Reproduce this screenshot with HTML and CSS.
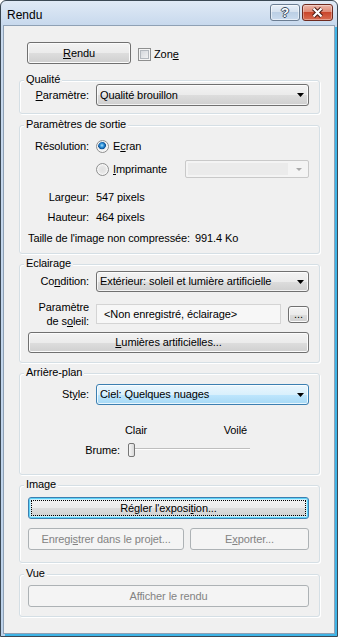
FILE: index.html
```html
<!DOCTYPE html>
<html lang="fr">
<head>
<meta charset="utf-8">
<title>Rendu</title>
<link rel="stylesheet" href="styles.css">
</head>
<body>
<div class="window">
  <div class="titlebar">
    <div class="title">Rendu</div>
    <div class="caption">
      <div class="cbtn help"><span>?</span></div>
      <div class="cbtn close">
        <svg width="13" height="11" viewBox="0 0 13 11"><path d="M2.5 1.5 L10.5 9.5 M10.5 1.5 L2.5 9.5" stroke="#4a1a12" stroke-width="4.2" fill="none"/><path d="M2.5 1.5 L10.5 9.5 M10.5 1.5 L2.5 9.5" stroke="#ffffff" stroke-width="2.2" fill="none"/></svg>
      </div>
    </div>
  </div>

  <div class="client">
    <div class="toprow">
      <button class="btn btn-rendu"><u>R</u>endu</button>
      <div class="check"><span class="checkbox"></span><span>Zon<u>e</u></span></div>
    </div>

    <section class="group g-first">
      <div class="gtitle">Qualité</div>
      <div class="form row-qual">
        <span class="lbl"><u>P</u>aramètre:</span>
        <div class="combo"><span class="val">Qualité brouillon</span><svg class="arrow" width="7" height="4" viewBox="0 0 7 4"><path d="M0 0H7L3.5 4Z" fill="#000"/></svg></div>
      </div>
    </section>

    <section class="group g-sortie">
      <div class="gtitle">Paramètres de sortie</div>
      <div class="form row-res">
        <span class="lbl">Résolution:</span>
        <div class="rad"><span class="radio on"></span><span>E<u>c</u>ran</span></div>
      </div>
      <div class="form row-imp">
        <span></span>
        <div class="imp">
          <div class="rad"><span class="radio"></span><span><u>I</u>mprimante</span></div>
          <div class="combo-dis"><span class="field"></span><svg class="arrow-dis" width="6" height="3" viewBox="0 0 6 3"><path d="M0 0H6L3 3Z" fill="#a9a9a9"/></svg></div>
        </div>
      </div>
      <div class="form row-info row-larg">
        <span class="lbl">Largeur:</span>
        <span>547 pixels</span>
      </div>
      <div class="form row-info row-haut">
        <span class="lbl">Hauteur:</span>
        <span>464 pixels</span>
      </div>
      <div class="taille">
        <span>Taille de l'image non compressée:</span>
        <span>991.4 Ko</span>
      </div>
    </section>

    <section class="group g-ecl">
      <div class="gtitle">Eclairage</div>
      <div class="form row-cond">
        <span class="lbl">Co<u>n</u>dition:</span>
        <div class="combo combo-21"><span class="val">Extérieur: soleil et lumière artificielle</span><svg class="arrow" width="7" height="4" viewBox="0 0 7 4"><path d="M0 0H7L3.5 4Z" fill="#000"/></svg></div>
      </div>
      <div class="form row-sol">
        <span class="lbl lbl-2">Paramètre<br>de s<u>o</u>leil:</span>
        <div class="sol">
          <div class="tbox">&lt;Non enregistré, éclairage&gt;</div>
          <button class="btn btn-dots">...</button>
        </div>
      </div>
      <button class="btn btn-wide btn-21 row-lum"><span><u>L</u>umières artificielles...</span></button>
    </section>

    <section class="group g-arr">
      <div class="gtitle">Arrière-plan</div>
      <div class="form row-style">
        <span class="lbl">St<u>y</u>le:</span>
        <div class="combo combo-21 combo-focus"><span class="val">Ciel: Quelques nuages</span><svg class="arrow" width="7" height="4" viewBox="0 0 7 4"><path d="M0 0H7L3.5 4Z" fill="#000"/></svg></div>
      </div>
      <div class="scale">
        <span>Clair</span>
        <span>Voilé</span>
      </div>
      <div class="brume">
        <span class="brume-lbl">Brume:</span>
        <div class="slider"><span class="thumb"></span></div>
      </div>
    </section>

    <section class="group g-img">
      <div class="gtitle">Image</div>
      <button class="btn btn-wide btn-focus row-regl"><span>Régler l'exposi<u>t</u>ion...</span></button>
      <div class="pair">
        <button class="btn btn-dis">Enregi<u>s</u>trer dans le projet...</button>
        <button class="btn btn-dis">E<u>x</u>porter...</button>
      </div>
    </section>

    <section class="group g-vue">
      <div class="gtitle">Vue</div>
      <button class="btn btn-wide btn-dis row-aff">Afficher le rendu</button>
    </section>
  </div>
</div>
</body>
</html>
```

FILE: styles.css
```css
* { box-sizing: border-box; }
html, body { margin: 0; padding: 0; }
body {
  font-family: "Liberation Sans", Arial, sans-serif;
  font-size: 11px;
  letter-spacing: -0.1px;
  color: #000;
  background: #ffffff;
}

.window {
  width: 338px;
  height: 637px;
  border: 1px solid #3b4854;
  border-radius: 6px 6px 0 0;
  background: linear-gradient(to bottom, #e0eaf6 0, #c8d9ed 24px, #bdd2ea 100%);
  padding: 0 2px 2px 2px;
  display: flex;
  flex-direction: column;
}

.titlebar {
  height: 24px;
  flex: none;
  display: flex;
  justify-content: space-between;
  align-items: flex-start;
  padding: 0 2px 0 4px;
}
.title {
  font-size: 12px;
  line-height: 14px;
  letter-spacing: 0;
  margin-top: 7px;
}
.caption { display: flex; gap: 2px; margin-top: 3px; }
.cbtn {
  height: 17px;
  border-radius: 3px;
  display: flex;
  align-items: center;
  justify-content: center;
}
.help {
  width: 30px;
  border: 1px solid #6b7d92;
  background: linear-gradient(#e8eff8 0%, #d5e1ef 45%, #bccfe5 50%, #cadbee 100%);
  box-shadow: inset 0 0 0 1px rgba(255,255,255,0.55);
}
.help span {
  font: bold 13px/13px "Liberation Sans", Arial, sans-serif;
  color: #fff;
  text-shadow: 1px 0 0 #3a4b5f, -1px 0 0 #3a4b5f, 0 1px 0 #3a4b5f, 0 -1px 0 #3a4b5f;
}
.close {
  width: 31px;
  border: 1px solid #6e2a1f;
  background: linear-gradient(#ecb5a8 0%, #df8b77 45%, #c9462c 50%, #d96c51 100%);
  box-shadow: inset 0 0 0 1px rgba(255,255,255,0.35);
}

.client {
  flex: 1;
  background: #f0f0f0;
  border: 1px solid #8fa1b5;
  box-shadow: 2px 2px 0 #3fb4e6;
  padding: 16px 14px 0 15px;
}

/* top row */
.toprow {
  display: flex;
  align-items: center;
  height: 22px;
  padding-left: 8px;
}
.btn {
  font: inherit;
  letter-spacing: inherit;
  color: #000;
  height: 22px;
  margin: 0;
  padding: 0;
  border: 1px solid #707070;
  border-radius: 3px;
  background: linear-gradient(#f3f3f3 0%, #ebebeb 50%, #dddddd 51%, #cfcfcf 100%);
  box-shadow: inset 0 0 0 1px #fbfbfb;
  display: flex;
  align-items: center;
  justify-content: center;
  line-height: 13px;
}
.btn-rendu { width: 104px; }
.check {
  display: flex;
  align-items: center;
  margin-left: 7px;
  margin-top: 3px;
  line-height: 13px;
}
.checkbox {
  width: 13px;
  height: 13px;
  border: 1px solid #8e8f8f;
  background: linear-gradient(135deg, #cdd1d7, #f8f8f8);
  box-shadow: inset 0 0 0 1px #f4f4f4, inset 0 0 0 2px #b3b8be;
  margin-right: 3px;
}

/* group boxes */
.group {
  border: 1px solid #d5dfe5;
  border-radius: 3px;
  box-shadow: 1px 1px 0 #ffffff, inset 1px 1px 0 #ffffff;
  padding: 0 10px 0 8px;
  margin-top: 10px;
}
.gtitle {
  margin: -7px 0 0 -4px;
  padding: 0 2px;
  width: fit-content;
  height: 11px;
  line-height: 11px;
  background: #f0f0f0;
}
.g-first { margin-top: 16px; padding-bottom: 7px; }
.g-sortie { margin-top: 11px; padding-bottom: 8px; }
.g-ecl { padding-bottom: 9px; }
.g-arr { padding-bottom: 17px; }
.g-img { padding-bottom: 12px; }
.g-vue { margin-top: 11px; padding-bottom: 9px; }

.form {
  display: grid;
  grid-template-columns: 61px 1fr;
  column-gap: 7px;
  align-items: center;
}
.lbl { text-align: right; line-height: 13px; white-space: nowrap; }
.lbl-2 { line-height: 14px; }

.combo {
  height: 22px;
  border: 1px solid #707070;
  border-radius: 3px;
  background: linear-gradient(#f3f3f3 0%, #ebebeb 50%, #dddddd 51%, #cfcfcf 100%);
  box-shadow: inset 0 0 0 1px rgba(255,255,255,0.75);
  display: flex;
  align-items: center;
  padding: 0 4px 0 3px;
}
.combo-21 { height: 21px; }
.combo-focus {
  border-color: #3c7fb1;
  background: linear-gradient(#eaf6fd 0%, #d9f0fc 50%, #bee6fd 51%, #a7d9f5 100%);
}
.val { flex: 1; white-space: nowrap; overflow: hidden; line-height: 13px; }
.arrow { flex: none; }

.row-qual { margin-top: -1px; }

/* sortie */
.row-res { margin-top: 8px; height: 16px; }
.row-imp { margin-top: 6px; height: 18px; }
.rad { display: flex; align-items: center; gap: 4px; line-height: 13px; }
.radio {
  width: 13px;
  height: 13px;
  border-radius: 50%;
  border: 1px solid #8e8f8f;
  background: radial-gradient(circle 6px at 50% 50%, #e0e0e0 0, #e6e6e6 3px, #f2f2f2 5.5px);
  box-shadow: inset 0 0 0 1px #f7f7f7;
  flex: none;
}
.radio.on {
  background: radial-gradient(circle 6px at 45% 40%, #a9e0fa 0, #2b8fd8 2px, #0c4e92 3.6px, #e4e8ec 4.2px, #f6f6f6 5.5px);
}
.imp { display: flex; align-items: center; height: 18px; }
.combo-dis {
  width: 124px;
  height: 18px;
  margin-left: auto;
  border: 1px solid #c9c9c9;
  border-radius: 2px;
  background: #f4f4f4;
  display: flex;
  align-items: center;
  padding: 2px;
}
.combo-dis .field { width: 100px; height: 100%; background: #ebebeb; }
.arrow-dis { margin-left: auto; margin-right: 4px; }

.row-info { line-height: 13px; height: 13px; }
.row-larg { margin-top: 13px; }
.row-haut { margin-top: 7px; }
.taille {
  display: flex;
  gap: 5px;
  margin-top: 8px;
  line-height: 13px;
  height: 13px;
}

/* eclairage */
.row-cond { margin-top: 2px; }
.row-sol { margin-top: 8px; height: 28px; }
.sol { display: flex; align-items: center; }
.tbox {
  width: 185px;
  height: 20px;
  border: 1px solid #d4d4d4;
  background: #f7f7f7;
  padding-left: 7px;
  display: flex;
  align-items: center;
  line-height: 13px;
  white-space: nowrap;
}
.btn-dots { width: 21px; height: 17px; margin-left: auto; }
.btn-wide { width: 100%; }
.btn-21 { height: 21px; }
.row-lum { margin-top: 4px; }

/* arriere-plan */
.row-style { margin-top: 6px; }
.scale {
  display: flex;
  justify-content: space-between;
  width: 122px;
  margin-left: 97px;
  margin-top: 19px;
  line-height: 13px;
  height: 13px;
}
.brume {
  display: flex;
  align-items: center;
  height: 14px;
  margin-top: 6px;
}
.brume-lbl { width: 92px; text-align: right; line-height: 13px; }
.slider {
  width: 122px;
  height: 14px;
  margin-left: 8px;
  background: linear-gradient(to bottom, transparent 5px, #bebebe 5px, #bebebe 6px, #ffffff 6px, #ffffff 7px, transparent 7px);
  display: flex;
}
.thumb {
  width: 7px;
  height: 14px;
  border: 1px solid #767676;
  border-radius: 2px;
  background: linear-gradient(to right, #f7f7f7, #d9d9d9);
}

/* image */
.btn-focus {
  border-color: #3c7fb1;
  box-shadow: inset 0 0 0 1px #5fd3f8, inset 0 0 0 2px #c8eefc;
  outline: 1px dotted #000;
  outline-offset: -4px;
}
.row-regl { margin-top: 7px; }
.pair {
  display: grid;
  grid-template-columns: 156px 1fr;
  column-gap: 6px;
  margin-top: 9px;
}
.btn-dis {
  border-color: #adb2b5;
  background: #f4f4f4;
  color: #838383;
  box-shadow: none;
}
.row-aff { margin-top: 6px; }
```
